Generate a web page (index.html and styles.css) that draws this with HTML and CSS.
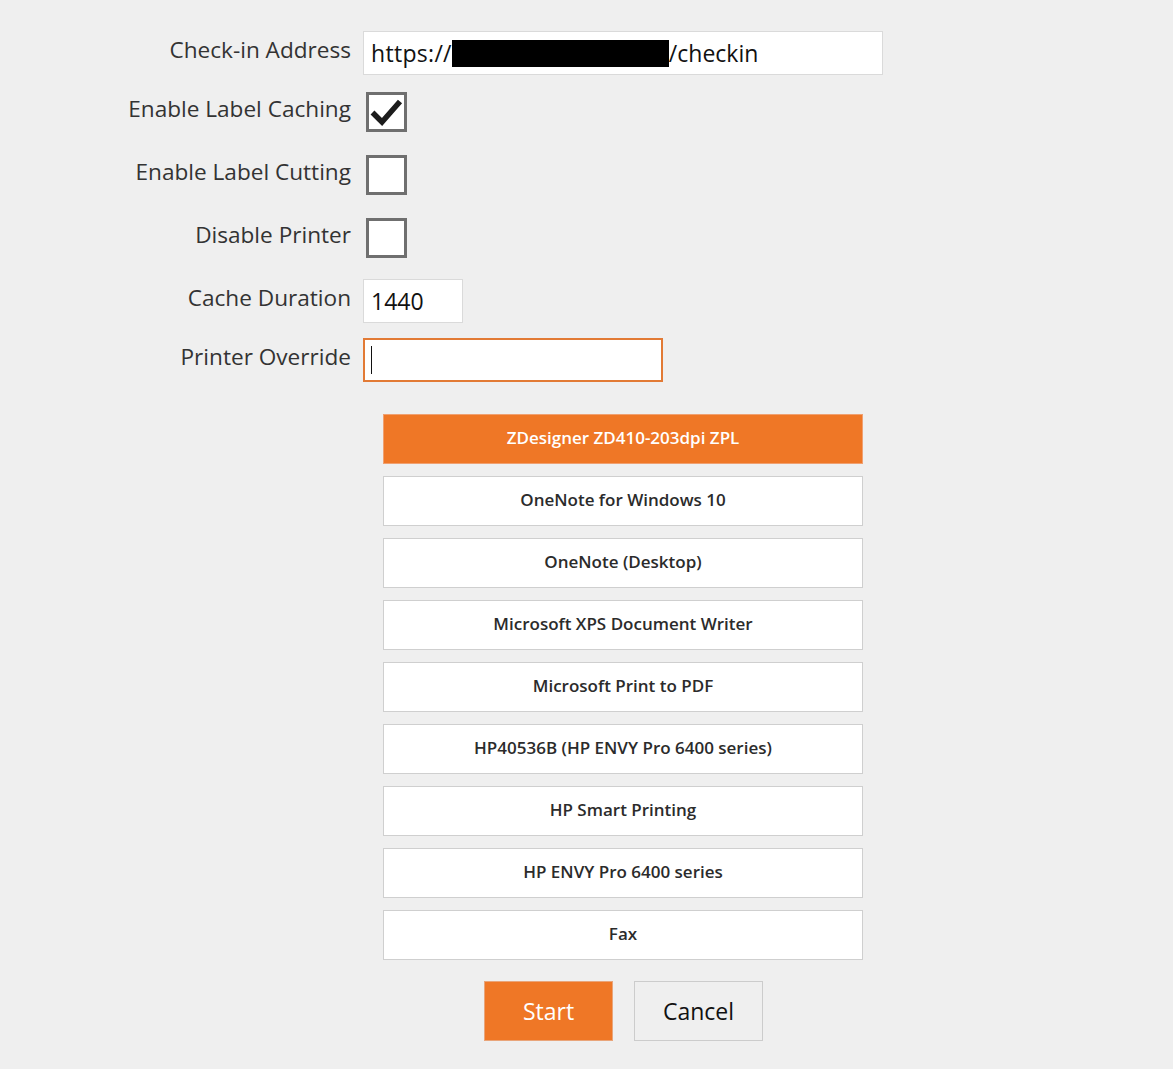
FILE: index.html
```html
<!DOCTYPE html>
<html>
<head>
<meta charset="utf-8">
<link rel="stylesheet" href="styles.css">
</head>
<body>
<div class="page">
  <div class="form">
    <div class="row row-address">
      <div class="label">Check-in Address</div>
      <div class="field field-address"><span>https://</span><span class="redact"></span><span>/checkin</span></div>
    </div>
    <div class="row row-check first-check">
      <div class="label">Enable Label Caching</div>
      <div class="checkbox">
        <svg viewBox="0 0 35 34" width="35" height="34"><path d="M3.5 17.5 L13 27 L31 6.5" fill="none" stroke="#1c1c1c" stroke-width="5.5" stroke-linejoin="miter"/></svg>
      </div>
    </div>
    <div class="row row-check">
      <div class="label">Enable Label Cutting</div>
      <div class="checkbox"></div>
    </div>
    <div class="row row-check">
      <div class="label">Disable Printer</div>
      <div class="checkbox"></div>
    </div>
    <div class="row row-cache">
      <div class="label">Cache Duration</div>
      <div class="field field-cache">1440</div>
    </div>
    <div class="row row-override">
      <div class="label">Printer Override</div>
      <div class="field field-override"><span class="caret"></span></div>
    </div>
  </div>

  <div class="printers">
    <div class="printer selected">ZDesigner ZD410-203dpi ZPL</div>
    <div class="printer">OneNote for Windows 10</div>
    <div class="printer">OneNote (Desktop)</div>
    <div class="printer">Microsoft XPS Document Writer</div>
    <div class="printer">Microsoft Print to PDF</div>
    <div class="printer">HP40536B (HP ENVY Pro 6400 series)</div>
    <div class="printer">HP Smart Printing</div>
    <div class="printer">HP ENVY Pro 6400 series</div>
    <div class="printer">Fax</div>
  </div>

  <div class="actions">
    <div class="btn btn-start">Start</div>
    <div class="btn btn-cancel">Cancel</div>
  </div>
</div>
</body>
</html>
```

FILE: styles.css
```css
html, body {
  margin: 0;
  padding: 0;
  background: #efefef;
}
body {
  font-family: "Open Sans", "Noto Sans", sans-serif;
  color: #333;
}
.page {
  width: 1173px;
  height: 1069px;
  padding-top: 31px;
  box-sizing: border-box;
}
.form {
  display: flex;
  flex-direction: column;
}
.row {
  display: flex;
  align-items: center;
  gap: 12px;
}
.label {
  width: 351px;
  text-align: right;
  font-size: 22.6px;
  color: #333;
  padding-bottom: 7px;
  white-space: nowrap;
}
.row-address { height: 44px; }
.row-check { height: 40px; margin-top: 23px; }
.first-check { margin-top: 17px; }
.row-cache { height: 44px; margin-top: 21px; }
.row-override { height: 44px; margin-top: 15px; }

.field {
  height: 44px;
  box-sizing: border-box;
  background: #fff;
  border: 1px solid #dadada;
  display: flex;
  align-items: center;
  padding: 0 7px;
  font-size: 23px;
  color: #111;
  white-space: nowrap;
}
.field-address { width: 520px; padding-left: 7px; }
.field-address span:first-child { letter-spacing: 0.3px; }
.field-cache { width: 100px; }
.field-override {
  width: 300px;
  border: 2px solid #e27a35;
  padding-left: 6px;
}
.redact {
  display: inline-block;
  width: 217px;
  height: 27px;
  background: #000;
}
.caret {
  display: inline-block;
  width: 1px;
  height: 28px;
  background: #111;
}
.checkbox {
  width: 41px;
  height: 40px;
  box-sizing: border-box;
  border: 3px solid #6f6f6f;
  background: #fff;
  margin-left: 3px;
  display: flex;
  align-items: center;
  justify-content: center;
}
.checkbox svg { display: block; }

.printers {
  margin-top: 32px;
  margin-left: 383px;
  width: 480px;
  display: flex;
  flex-direction: column;
  gap: 12px;
}
.printer {
  height: 50px;
  box-sizing: border-box;
  background: #fff;
  border: 1px solid #cfcfcf;
  display: flex;
  align-items: center;
  justify-content: center;
  font-size: 17px;
  font-weight: 600;
  color: #2b2b2b;
  padding-bottom: 3px;
}
.printer.selected {
  background: #ef7726;
  border-color: #f0a070;
  color: #fff;
}

.actions {
  margin-top: 21px;
  margin-left: 484px;
  display: flex;
  gap: 21px;
}
.btn {
  width: 129px;
  height: 60px;
  box-sizing: border-box;
  display: flex;
  align-items: center;
  justify-content: center;
  font-size: 23px;
  border: 1px solid #cccccc;
}
.btn-start {
  background: #ef7726;
  border-color: #e9a57a;
  color: #fff;
}
.btn-cancel {
  background: #efefef;
  color: #111;
}
```
